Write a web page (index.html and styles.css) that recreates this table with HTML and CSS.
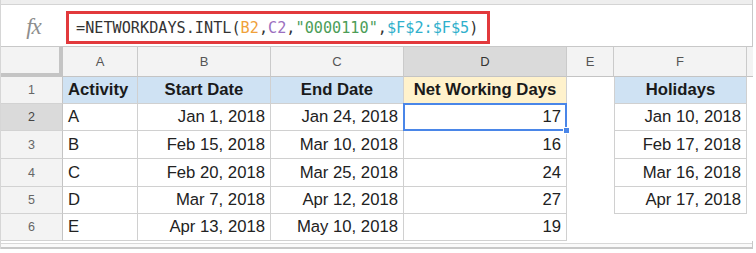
FILE: index.html
```html
<!DOCTYPE html>
<html>
<head>
<meta charset="utf-8">
<link rel="stylesheet" href="styles.css">
</head>
<body>
<div class="sheet">
  <div class="topbar"></div>
  <div class="formula-bar">
    <div class="fx">fx</div>
    <div class="formula-box"><span class="plain">=NETWORKDAYS.INTL(</span><span class="r1">B2</span><span class="plain">,</span><span class="r2">C2</span><span class="plain">,</span><span class="str">"0000110"</span><span class="plain">,</span><span class="r3">$F$2:$F$5</span><span class="plain">)</span></div>
  </div>
  <div class="grid">
    <div class="corner"></div>
    <div class="ch">A</div>
    <div class="ch">B</div>
    <div class="ch">C</div>
    <div class="ch sel">D</div>
    <div class="ch">E</div>
    <div class="ch">F</div>
    <div class="ch end"></div>

    <div class="rh">1</div>
    <div class="cell blue b">Activity</div>
    <div class="cell blue b ctr">Start Date</div>
    <div class="cell blue b ctr">End Date</div>
    <div class="cell yellow b ctr">Net Working Days</div>
    <div class="gap"></div>
    <div class="hol blue b ctr">Holidays</div>
    <div class="end-col"></div>

    <div class="rh sel">2</div>
    <div class="cell">A</div>
    <div class="cell num">Jan 1, 2018</div>
    <div class="cell num">Jan 24, 2018</div>
    <div class="cell num active">17<span class="selbox"><span class="handle"></span></span></div>
    <div class="gap"></div>
    <div class="hol num">Jan 10, 2018</div>
    <div class="end-col"></div>

    <div class="rh">3</div>
    <div class="cell">B</div>
    <div class="cell num">Feb 15, 2018</div>
    <div class="cell num">Mar 10, 2018</div>
    <div class="cell num">16</div>
    <div class="gap"></div>
    <div class="hol num">Feb 17, 2018</div>
    <div class="end-col"></div>

    <div class="rh">4</div>
    <div class="cell">C</div>
    <div class="cell num">Feb 20, 2018</div>
    <div class="cell num">Mar 25, 2018</div>
    <div class="cell num">24</div>
    <div class="gap"></div>
    <div class="hol num">Mar 16, 2018</div>
    <div class="end-col"></div>

    <div class="rh">5</div>
    <div class="cell">D</div>
    <div class="cell num">Mar 7, 2018</div>
    <div class="cell num">Apr 12, 2018</div>
    <div class="cell num">27</div>
    <div class="gap"></div>
    <div class="hol num">Apr 17, 2018</div>
    <div class="end-col"></div>

    <div class="rh">6</div>
    <div class="cell">E</div>
    <div class="cell num">Apr 13, 2018</div>
    <div class="cell num">May 10, 2018</div>
    <div class="cell num">19</div>
    <div class="gap"></div>
    <div class="gap"></div>
    <div class="end-col"></div>
  </div>
  <div class="hscroll"></div>
</div>
</body>
</html>
```

FILE: styles.css
```css
* { box-sizing: border-box; }
html, body { margin: 0; padding: 0; background: #fff; }
body { width: 756px; height: 253px; overflow: hidden; font-family: "Liberation Sans", Arial, sans-serif; }

.sheet {
  width: 753px;
  border-left: 1px solid #d6d6d6;
  border-right: 1px solid #c8c8c8;
}

.topbar {
  height: 5px;
  background: #eeeeee;
  border-bottom: 1px solid #d4d4d4;
}

.formula-bar {
  height: 41px;
  display: flex;
  align-items: flex-start;
  background: #fff;
}

.fx {
  width: 65px;
  height: 44px;
  display: flex;
  align-items: center;
  justify-content: center;
  padding-right: 0;
  font-family: "Liberation Serif", "Times New Roman", serif;
  font-style: italic;
  font-size: 23px;
  color: #8e8e8e;
  letter-spacing: -1px;
}

.formula-box {
  margin-top: 6px;
  width: 424px;
  height: 33px;
  border: 3px solid #e2393c;
  display: flex;
  align-items: center;
  padding-left: 7px;
  font-family: "DejaVu Sans Mono", "Liberation Mono", monospace;
  font-size: 15.2px;
  white-space: pre;
  color: #222;
}
.formula-box .plain { color: #333; }
.formula-box .r1 { color: #f0a13a; }
.formula-box .r2 { color: #9b6fc0; }
.formula-box .str { color: #4c9d57; }
.formula-box .r3 { color: #30b0cc; }

.grid {
  display: grid;
  grid-template-columns: 62px 75px 133px 133px 163px 47px 133px 6px;
  grid-template-rows: 31px 27px 27px 28px 28px 27px 27px;
  font-size: 16.7px;
  color: #222;
}

.corner {
  background: #f3f3f3;
  border-top: 1px solid #c8c8c8;
  border-right: 4px solid #c4c4c4;
  border-bottom: 4px solid #c4c4c4;
}

.ch {
  background: #f3f3f3;
  border-top: 1px solid #c8c8c8;
  border-right: 1px solid #cacaca;
  border-bottom: 1px solid #c4c4c4;
  display: flex;
  align-items: center;
  justify-content: center;
  font-size: 13px;
  color: #555;
}
.ch.sel { background: #dadada; color: #333; }
.ch.end { border-right: none; }

.rh {
  background: #f3f3f3;
  border-right: 1px solid #c4c4c4;
  border-bottom: 1px solid #d2d2d2;
  display: flex;
  align-items: center;
  justify-content: center;
  font-size: 12.5px;
  color: #666;
}
.rh.sel { background: #dadada; color: #444; }

.cell, .hol {
  border-right: 1px solid #d0d0d0;
  border-bottom: 1px solid #d0d0d0;
  display: flex;
  align-items: center;
  padding: 0 5px;
  white-space: nowrap;
}
.hol { border-left: 1px solid #d0d0d0; }

.num { justify-content: flex-end; }
.ctr { justify-content: center; }
.b { font-weight: bold; color: #1a1a1a; }
.blue { background: #cfe2f3; }
.yellow { background: #fff2cc; }

.gap { background: #fff; }
.end-col { background: #fff; }

.active { position: relative; }
.selbox {
  position: absolute;
  left: -1px;
  top: -1px;
  right: -1px;
  bottom: -1px;
  border: 2px solid #4a86e8;
  pointer-events: none;
}
.handle {
  position: absolute;
  right: -5px;
  bottom: -5px;
  width: 7px;
  height: 7px;
  background: #4a86e8;
  border: 1px solid #fff;
}

.hscroll {
  margin-top: 2px;
  height: 6px;
  border-top: 1px solid #d8d8d8;
  border-bottom: 2px solid #c8c8c8;
  background: #fafafa;
}
```
